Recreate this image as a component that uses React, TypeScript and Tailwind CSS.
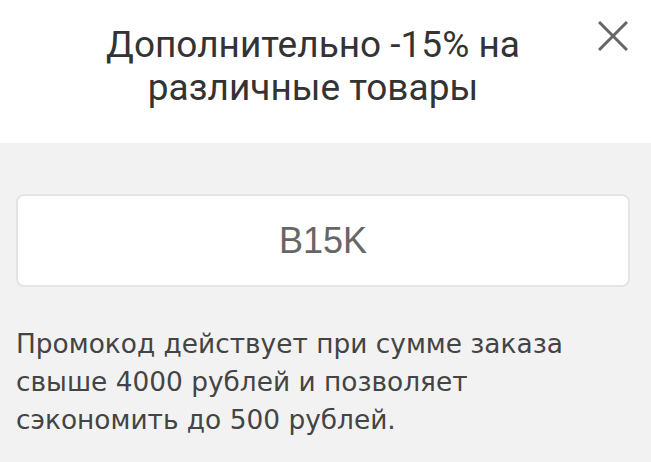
import React from "react";

const PromoSheet: React.FC = () => {
  return (
    <div className="w-[651px] h-[462px] flex flex-col bg-[#f2f2f2] overflow-hidden">
      <div className="h-[143px] shrink-0 bg-white flex items-start">
        <div className="w-[40px] shrink-0" />
        <h2 className="flex-1 pt-[23px] text-center text-[37px] leading-[43px] text-[#333] font-['Roboto',sans-serif]">
          Дополнительно -15% на различные товары
        </h2>
        <button className="w-[30px] shrink-0 ml-[12px] mr-[23px] mt-[21px] flex justify-center text-[#666]">
          <svg width="30" height="30" viewBox="0 0 30 30" fill="none" stroke="currentColor" strokeWidth="3">
            <path d="M1 1 L29 29 M29 1 L1 29" />
          </svg>
        </button>
      </div>
      <div className="pl-[16px] pr-[21px] pt-[51px]">
        <div className="h-[93px] bg-white border-2 border-[#e4e4e4] rounded-[8px] flex items-center justify-center text-[36px] text-[#666] font-['Liberation_Sans',sans-serif]">
          B15K
        </div>
        <p className="mt-[38px] max-w-[585px] text-[26.4px] leading-[38px] text-[#444] font-['DejaVu_Sans',sans-serif]">
          Промокод действует при сумме заказа свыше 4000 рублей и позволяет
          сэкономить до 500 рублей.
        </p>
      </div>
    </div>
  );
};

export default function App() {
  return <PromoSheet />;
}
